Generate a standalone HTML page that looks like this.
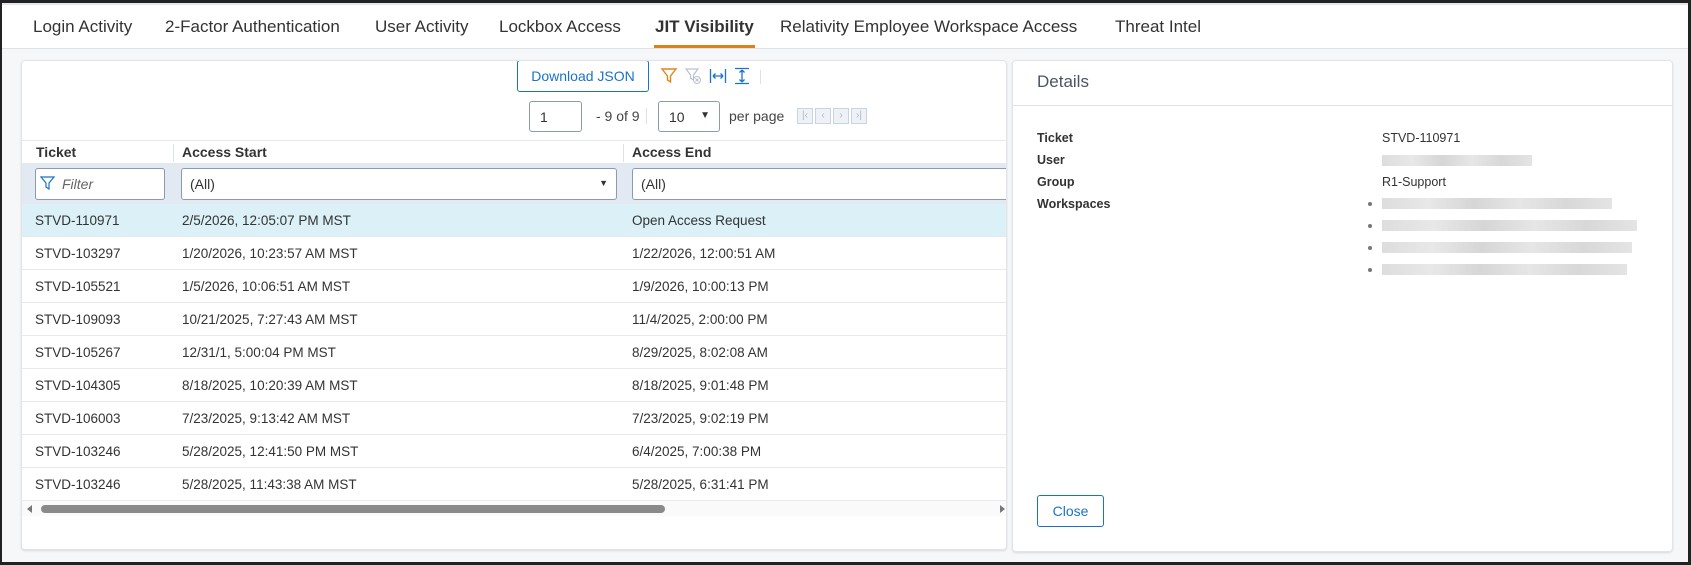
<!DOCTYPE html>
<html><head><meta charset="utf-8"><style>
*{box-sizing:border-box;margin:0;padding:0}
body{width:1691px;height:565px;overflow:hidden;background:#222;font-family:"Liberation Sans",Arial,sans-serif;position:relative}
.frame{position:absolute;left:2px;top:3px;width:1686px;height:559px;background:#f6f7f9;border-top:2px solid #e3e7ec}
.a{position:absolute}
.tabs{position:absolute;left:0;top:0;width:1686px;height:44px;background:#fff;border-bottom:1px solid #dfe3e8}
.tab{position:absolute;top:12px;font-size:17px;color:#333;white-space:nowrap}
.panel{position:absolute;background:#fff;border:1px solid #e1e5ea;border-radius:4px;box-shadow:0 1px 2px rgba(0,0,0,.12)}
.btn{position:absolute;border:1px solid #1a73c9;border-radius:3px;color:#1a73c9;font-size:14px;text-align:center;background:#fff}
.inp{position:absolute;border:1px solid #8a9bb0;border-radius:3px;background:#fff;font-size:14px;color:#333}
.th{position:absolute;font-size:14px;font-weight:bold;color:#333}
.row{position:absolute;left:0;width:984px;height:33px;border-bottom:1px solid #e6e9ed;font-size:13.5px;color:#333}
.row span{position:absolute;top:9px;white-space:nowrap}
.lbl{position:absolute;left:24px;font-size:12.5px;font-weight:bold;color:#333}
.val{position:absolute;left:369px;font-size:12.5px;color:#333}
.blur{position:absolute;left:369px;height:11px;background:linear-gradient(90deg,#ddd,#e8e8e8 20%,#d6d6d6 40%,#e6e6e6 60%,#d8d8d8 80%,#e4e4e4)}
.dot{position:absolute;left:355px;width:4px;height:4px;border-radius:2px;background:#777}
.nb{position:absolute;top:0;width:16px;height:16px;border:1px solid #c8d4e2;background:#eef2f7;font-size:10px;color:#a8b8cc;text-align:center;line-height:14px}
</style></head><body>
<div class="frame">
 <div class="tabs">
  <div class="tab" style="left:31px">Login Activity</div>
  <div class="tab" style="left:163px">2-Factor Authentication</div>
  <div class="tab" style="left:373px">User Activity</div>
  <div class="tab" style="left:497px">Lockbox Access</div>
  <div class="tab" style="left:653px;font-weight:bold;color:#333">JIT Visibility</div>
  <div class="a" style="left:652px;top:40px;width:101px;height:3px;background:#d9821e"></div>
  <div class="tab" style="left:778px">Relativity Employee Workspace Access</div>
  <div class="tab" style="left:1113px">Threat Intel</div>
 </div>

 <div class="panel" style="left:19px;top:55px;width:986px;height:490px;overflow:hidden">
  <div class="btn" style="left:495px;top:-1px;width:132px;height:32px;line-height:30px">Download JSON</div>
  <svg class="a" style="left:638px;top:6px" width="18" height="18" viewBox="0 0 18 18"><path d="M2 2h14l-5.5 7v6l-3-2V9z" fill="none" stroke="#e0861c" stroke-width="1.4"/></svg>
  <svg class="a" style="left:662px;top:6px" width="18" height="18" viewBox="0 0 18 18"><path d="M2 2h12l-4.5 6v5l-3-2V8z" fill="none" stroke="#b8c2cc" stroke-width="1.2"/><circle cx="13" cy="13" r="3.5" fill="none" stroke="#b8c2cc"/><path d="M11.5 11.5l3 3M14.5 11.5l-3 3" stroke="#b8c2cc"/></svg>
  <svg class="a" style="left:687px;top:6px" width="18" height="18" viewBox="0 0 18 18"><path d="M1.5 2v14M16.5 2v14M4 9h10M4 9l2.5-2.5M4 9l2.5 2.5M14 9l-2.5-2.5M14 9l-2.5 2.5" fill="none" stroke="#1a73c9" stroke-width="1.3"/></svg>
  <svg class="a" style="left:711px;top:6px" width="18" height="18" viewBox="0 0 18 18"><path d="M2 1.5h14M2 16.5h14M9 3v12M9 3l-2.5 2.5M9 3l2.5 2.5M9 15l-2.5-2.5M9 15l2.5-2.5" fill="none" stroke="#1a73c9" stroke-width="1.3"/></svg>
  <div class="a" style="left:738px;top:9px;width:1px;height:14px;background:#dde2e8"></div>

  <div class="inp" style="left:507px;top:40px;width:53px;height:31px;padding:7px 10px">1</div>
  <div class="a" style="left:574px;top:47px;font-size:14px;color:#444">- 9 of 9</div>
  <div class="a" style="left:624px;top:47px;width:1px;height:16px;background:#dde2e8"></div>
  <div class="inp" style="left:636px;top:40px;width:62px;height:31px;padding:7px 10px">10<span class="a" style="right:9px;top:8px;font-size:10px">▼</span></div>
  <div class="a" style="left:707px;top:47px;font-size:14px;color:#444">per page</div>
  <div class="a" style="left:775px;top:47px;width:70px;height:17px">
   <div class="nb" style="left:0">|‹</div><div class="nb" style="left:18px">‹</div><div class="nb" style="left:36px">›</div><div class="nb" style="left:54px">›|</div>
  </div>

  <div class="a" style="left:0;top:79px;width:986px;height:1px;background:#e6eaef"></div>
  <div class="th" style="left:14px;top:83px">Ticket</div>
  <div class="a" style="left:151px;top:83px;width:1px;height:18px;background:#dde2e8"></div>
  <div class="th" style="left:160px;top:83px">Access Start</div>
  <div class="a" style="left:601px;top:83px;width:1px;height:18px;background:#dde2e8"></div>
  <div class="th" style="left:610px;top:83px">Access End</div>
  <div class="a" style="left:0;top:102px;width:986px;height:41px;background:#e2e9f2"></div>
  <div class="inp" style="left:13px;top:107px;width:130px;height:32px;padding:7px 0 0 26px;font-style:italic;color:#666">Filter</div>
  <svg class="a" style="left:18px;top:114px" width="16" height="18" viewBox="0 0 16 18"><path d="M1 2h13l-5 6v6l-3-2V8z" fill="none" stroke="#1a73c9" stroke-width="1.2"/></svg>
  <div class="inp" style="left:159px;top:107px;width:436px;height:32px;padding:7px 8px">(All)<span class="a" style="right:8px;top:9px;font-size:9px">▼</span></div>
  <div class="inp" style="left:610px;top:107px;width:420px;height:32px;padding:7px 8px">(All)</div>

  <div class="row" style="top:143px;background:#dbf0f7"><span style="left:13px">STVD-110971</span><span style="left:160px">2/5/2026, 12:05:07 PM MST</span><span style="left:610px">Open Access Request</span></div>
  <div class="row" style="top:176px"><span style="left:13px">STVD-103297</span><span style="left:160px">1/20/2026, 10:23:57 AM MST</span><span style="left:610px">1/22/2026, 12:00:51 AM</span></div>
  <div class="row" style="top:209px"><span style="left:13px">STVD-105521</span><span style="left:160px">1/5/2026, 10:06:51 AM MST</span><span style="left:610px">1/9/2026, 10:00:13 PM</span></div>
  <div class="row" style="top:242px"><span style="left:13px">STVD-109093</span><span style="left:160px">10/21/2025, 7:27:43 AM MST</span><span style="left:610px">11/4/2025, 2:00:00 PM</span></div>
  <div class="row" style="top:275px"><span style="left:13px">STVD-105267</span><span style="left:160px">12/31/1, 5:00:04 PM MST</span><span style="left:610px">8/29/2025, 8:02:08 AM</span></div>
  <div class="row" style="top:308px"><span style="left:13px">STVD-104305</span><span style="left:160px">8/18/2025, 10:20:39 AM MST</span><span style="left:610px">8/18/2025, 9:01:48 PM</span></div>
  <div class="row" style="top:341px"><span style="left:13px">STVD-106003</span><span style="left:160px">7/23/2025, 9:13:42 AM MST</span><span style="left:610px">7/23/2025, 9:02:19 PM</span></div>
  <div class="row" style="top:374px"><span style="left:13px">STVD-103246</span><span style="left:160px">5/28/2025, 12:41:50 PM MST</span><span style="left:610px">6/4/2025, 7:00:38 PM</span></div>
  <div class="row" style="top:407px"><span style="left:13px">STVD-103246</span><span style="left:160px">5/28/2025, 11:43:38 AM MST</span><span style="left:610px">5/28/2025, 6:31:41 PM</span></div>
  <div class="a" style="left:0;top:440px;width:986px;height:15px;background:#fafafa"></div>
  <div class="a" style="left:5px;top:444px;width:0;height:0;border-right:5px solid #777;border-top:4px solid transparent;border-bottom:4px solid transparent"></div>
  <div class="a" style="left:19px;top:444px;width:624px;height:8px;border-radius:4px;background:#8a8a8a"></div>
  <div class="a" style="left:978px;top:444px;width:0;height:0;border-left:5px solid #777;border-top:4px solid transparent;border-bottom:4px solid transparent"></div>
 </div>

 <div class="panel" style="left:1010px;top:55px;width:661px;height:492px">
  <div class="a" style="left:24px;top:11px;font-size:17px;color:#4a5563">Details</div>
  <div class="a" style="left:0;top:44px;width:659px;height:1px;background:#dfe4ea"></div>
  <div class="lbl" style="top:70px">Ticket</div><div class="val" style="top:70px">STVD-110971</div>
  <div class="lbl" style="top:92px">User</div><div class="blur" style="top:94px;width:150px"></div>
  <div class="lbl" style="top:114px">Group</div><div class="val" style="top:114px">R1-Support</div>
  <div class="lbl" style="top:136px">Workspaces</div>
  <div class="dot" style="top:141px"></div><div class="blur" style="top:137px;width:230px"></div>
  <div class="dot" style="top:163px"></div><div class="blur" style="top:159px;width:255px"></div>
  <div class="dot" style="top:185px"></div><div class="blur" style="top:181px;width:250px"></div>
  <div class="dot" style="top:207px"></div><div class="blur" style="top:203px;width:245px"></div>
  <div class="btn" style="left:24px;top:434px;width:67px;height:32px;line-height:30px">Close</div>
 </div>
</div>
</body></html>
